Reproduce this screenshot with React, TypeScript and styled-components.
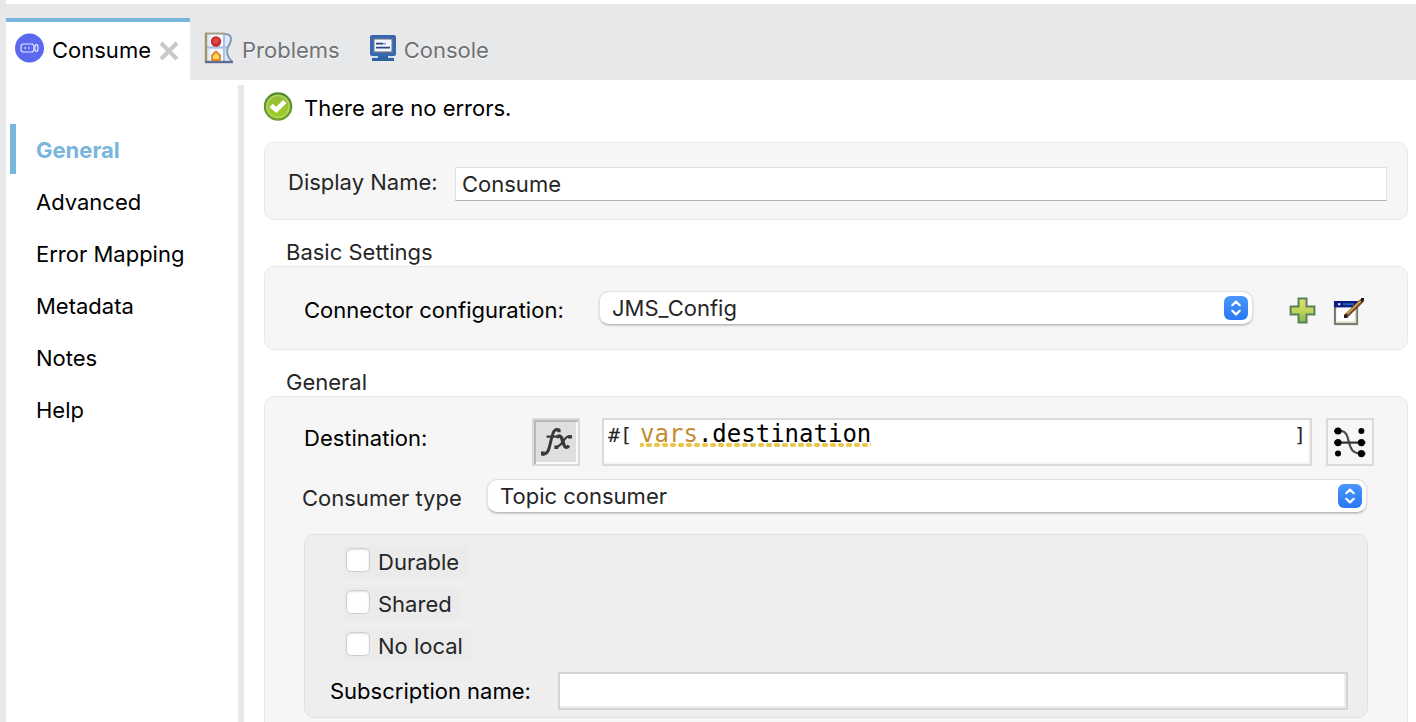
import React from "react";
import styled, { createGlobalStyle } from "styled-components";

const GlobalStyle = createGlobalStyle`
  *, *::before, *::after { box-sizing: border-box; }
  body {
    margin: 0;
    background: #ffffff;
    color: #000000;
    font-family: Inter, "Liberation Sans", sans-serif;
    font-size: 22px;
    line-height: 28px;
  }
  button, input, select { font: inherit; color: inherit; }
`;

const Shell = styled.div`
  height: 100vh;
  display: flex;
  flex-direction: column;
  overflow: hidden;
  border-left: 6px solid #e7e8ea;
`;

const TabBar = styled.div`
  flex: none;
  display: flex;
  align-items: flex-end;
  gap: 14px;
  height: 76px;
  margin-top: 4px;
  background: #e7e8ea;
`;

const TabItem = styled.div<{ $active?: boolean }>`
  display: flex;
  align-items: center;
  height: 62px;
  padding: ${(p) => (p.$active ? "0 10px 2px 9px" : "0 16px 2px 0")};
  border-top: 4px solid ${(p) => (p.$active ? "#78b6dc" : "transparent")};
  background: ${(p) => (p.$active ? "#ffffff" : "transparent")};
  width: ${(p) => (p.$active ? "184px" : "auto")};
`;

const Tab = styled.button<{ $active?: boolean }>`
  display: flex;
  align-items: center;
  gap: 8px;
  flex: 1;
  padding: 0;
  border: 0;
  background: none;
  color: ${(p) => (p.$active ? "#000000" : "#707173")};
  text-shadow: ${(p) => (p.$active ? "none" : "0 1px 0 #ffffff")};
  white-space: nowrap;
  svg { flex: none; margin-bottom: 4px; }
`;

const CloseButton = styled.button`
  display: flex;
  padding: 2px 0 0;
  border: 0;
  background: none;
`;

const Body = styled.div`
  flex: 1;
  min-height: 0;
  display: flex;
  padding-top: 5px;
`;

const Sidebar = styled.nav`
  flex: none;
  width: 238px;
  padding: 39px 0 0 4px;
  border-right: 6px solid #e7e8ea;
`;

const NavList = styled.ul`
  display: flex;
  flex-direction: column;
  gap: 2px;
  margin: 0;
  padding: 0;
  list-style: none;
`;

const NavLink = styled.a<{ $active?: boolean }>`
  display: flex;
  align-items: center;
  height: 50px;
  padding-left: 20px;
  padding-top: 2px;
  border-left: 6px solid ${(p) => (p.$active ? "#78b6dc" : "transparent")};
  color: ${(p) => (p.$active ? "#78b6dc" : "#000000")};
  font-weight: ${(p) => (p.$active ? 700 : 400)};
  text-decoration: none;
`;

const Content = styled.main`
  flex: 1;
  min-width: 0;
  padding: 7px 8px 0 20px;
  color: #262626;
`;

const Status = styled.div`
  display: flex;
  align-items: center;
  gap: 11px;
  height: 30px;
  color: #000000;
  line-height: 30px;
`;

const StatusText = styled.span`
  padding-top: 2px;
`;

const Panel = styled.section`
  border: 1px solid #e9e9e9;
  border-radius: 10px;
  background: #f6f6f6;
`;

const NamePanel = styled(Panel)`
  display: flex;
  align-items: center;
  height: 78px;
  margin-top: 20px;
  padding: 6px 20px 0 23px;
`;

const GroupTitle = styled.h2`
  margin: 0;
  padding: 18px 0 0 22px;
  font-size: 22px;
  font-weight: 400;
  line-height: 28px;
`;

const NameInput = styled.input`
  flex: 1;
  min-width: 0;
  height: 34px;
  padding: 0 6px;
  border: 1px solid #e0e0e0;
  border-bottom-color: #b4b4b4;
  background: #ffffff;
  outline: none;
`;

const Label = styled.label<{ $width: number; $strong?: boolean; $shift?: "up" | "down" }>`
  flex: none;
  width: ${(p) => p.$width}px;
  padding-top: ${(p) => (p.$shift === "down" ? 4 : 0)}px;
  padding-bottom: ${(p) => (p.$shift === "up" ? 4 : 0)}px;
  color: ${(p) => (p.$strong ? "#000000" : "#262626")};
  white-space: nowrap;
`;

const ConfigPanel = styled(Panel)`
  display: flex;
  align-items: center;
  height: 84px;
  padding: 0 42px 0 39px;
`;

const SelectWrap = styled.div`
  position: relative;
  flex: 1;
  min-width: 0;
  height: 34px;
`;

const Select = styled.select`
  display: block;
  width: 100%;
  height: 34px;
  padding: 0 40px 0 12px;
  border: 1px solid #e0e0e0;
  border-bottom-color: #bdbdbd;
  border-radius: 10px;
  background: #ffffff;
  box-shadow: 0 1px 2px rgba(0, 0, 0, 0.18);
  appearance: none;
  outline: none;
`;

const SelectArrows = styled.svg`
  position: absolute;
  top: 5px;
  right: 5px;
  pointer-events: none;
`;

const IconButton = styled.button`
  display: flex;
  flex: none;
  padding: 0;
  border: 0;
  background: none;
`;

const IconGroup = styled.div`
  display: flex;
  gap: 17px;
  margin-left: 36px;
  padding-top: 6px;
`;

const GeneralPanel = styled(Panel)`
  padding: 21px 33px 40px 37px;
`;

const DestinationRow = styled.div`
  display: flex;
  align-items: flex-start;
  padding-left: 2px;
  line-height: 40px;
`;

const SquareButton = styled.button<{ $pressed?: boolean }>`
  display: flex;
  align-items: center;
  justify-content: center;
  flex: none;
  width: 48px;
  height: 48px;
  padding: 0;
  border: 2px solid #dadada;
  background: ${(p) => (p.$pressed ? "#dfdfdf" : "#f6f6f6")};
  box-shadow: ${(p) =>
    p.$pressed ? "inset 2px 2px 0 #b8b8b8, inset -2px -2px 0 #fafafa" : "none"};
`;

const Editor = styled.div`
  display: flex;
  flex: 1;
  min-width: 0;
  height: 48px;
  margin: 0 14px 0 22px;
  padding: 0 4px;
  border: 2px solid #dadada;
  background: #ffffff;
  box-shadow: inset -2px -2px 0 #f6f6f6;
  font-family: "DejaVu Sans Mono", monospace;
  color: #000000;
`;

const Bracket = styled.span`
  flex: none;
  color: #262626;
  font-size: 20px;
  line-height: 30px;
`;

const Expression = styled.div`
  flex: 1;
  min-width: 0;
  padding-left: 8px;
  font-size: 24px;
  line-height: 28px;
  white-space: nowrap;
  outline: none;
`;

const Warning = styled.span`
  display: inline-block;
  background: radial-gradient(ellipse 3px 3px at 4px 2px, #ecc64c 90%, transparent 100%)
    -3px 23px / 8px 4px repeat-x;
`;

const Variable = styled.span`
  color: #c28d32;
`;

const ConsumerRow = styled.div`
  display: flex;
  align-items: center;
  margin: 13px 7px 0 0;
`;

const SubPanel = styled.fieldset`
  display: flex;
  flex-direction: column;
  align-items: flex-start;
  gap: 10px;
  min-width: 0;
  height: 184px;
  margin: 21px 6px 0 2px;
  padding: 11px 19px 0 25px;
  border: 1px solid #e2e2e2;
  border-radius: 10px;
  background: #eeeeee;
`;

const CheckLabel = styled.label`
  display: flex;
  align-items: center;
  gap: 8px;
  height: 32px;
  margin-left: 14px;
  padding: 0 9px 0 2px;
  background: #ebebeb;
`;

const Checkbox = styled.input`
  flex: none;
  width: 24px;
  height: 24px;
  margin: 0 0 4px;
  border: 1px solid #cfcfcf;
  border-radius: 5px;
  background: #ffffff;
  box-shadow: inset 0 1px 2px rgba(0, 0, 0, 0.12);
  appearance: none;
`;

const SubscriptionRow = styled.div`
  display: flex;
  align-items: center;
  align-self: stretch;
  line-height: 30px;
`;

const TextInput = styled.input`
  flex: 1;
  min-width: 0;
  height: 38px;
  padding: 0 6px;
  border: 2px solid #d4d4d4;
  background: #ffffff;
  box-shadow: inset -2px -2px 0 #eeeeee;
  outline: none;
`;

const ConsumeIcon = () => (
  <svg width="29" height="30" viewBox="0 0 29 30" aria-hidden="true">
    <circle cx="14.5" cy="15" r="14.5" fill="#5b69f1" />
    <g fill="none" stroke="#e4e6ff" strokeWidth="1.2">
      <path d="M17.5 11H8.2Q6 11 6 13.2V16.8Q6 19 8.2 19H17.5" />
      <path d="M17 11Q19 11 19 15T17 19" />
      <ellipse cx="21.4" cy="15" rx="1.6" ry="3.4" />
    </g>
    <path d="M9.4 14.2h1.6v1.6H9.4zM13 14.2h1.6v1.6H13z" fill="#e4e6ff" />
  </svg>
);

const CloseIcon = () => (
  <svg width="22" height="22" viewBox="0 0 22 22" aria-hidden="true">
    <path d="M3 3L19 19M19 3L3 19" stroke="#c9c9c9" strokeWidth="4.2" />
  </svg>
);

const ProblemsIcon = () => (
  <svg width="30" height="32" viewBox="0 0 30 32" aria-hidden="true">
    <path d="M1 1H22Q27.5 2 27 8Q26.5 11 24 15Q22 20 24.5 25L29 30H1Z" fill="#dcebfa" />
    <path d="M6 3H19V14H6zM6 17H19V29H6z" fill="#f5f9fd" />
    <path d="M1 15.5H24M20 2V30" stroke="#a9bfe3" strokeWidth="2" />
    <path d="M21 2Q27.5 2 27 8Q26.5 11 24 15Q22 20 24.5 25L28 30" fill="none" stroke="#8798b4" strokeWidth="2" />
    <path d="M1 1.5H21" stroke="#a5a388" strokeWidth="2" />
    <path d="M2 1V30" stroke="#a39662" strokeWidth="2.4" />
    <path d="M1 30H29" stroke="#5e6c92" strokeWidth="2.4" />
    <circle cx="12" cy="9.5" r="5.2" fill="#c92a2b" />
    <circle cx="12" cy="9" r="2.8" fill="#df4a48" />
    <path d="M12 19.5L16 23.5V28H8V23.5Z" fill="#fbd85e" stroke="#df8c28" strokeWidth="2" strokeLinejoin="round" />
  </svg>
);

const ConsoleIcon = () => (
  <svg width="26" height="28" viewBox="0 0 26 28" aria-hidden="true">
    <rect x="0" y="1" width="26" height="21" rx="2" fill="#3767b0" />
    <rect x="3" y="4" width="20" height="15" fill="#5e6f92" />
    <rect x="4.5" y="5.5" width="17" height="12" fill="#f3f7fd" />
    <path d="M6 9.7H13M6 13.7H20" stroke="#2d4580" strokeWidth="1.8" />
    <path d="M13 9.7H16" stroke="#93a5d3" strokeWidth="1.8" />
    <path d="M8 22H18V24H24V27H2V24H8Z" fill="#33609f" />
    <path d="M3 23.2H8M18 23.2H23" stroke="#c7d8f2" strokeWidth="1.4" />
  </svg>
);

const OkIcon = () => (
  <svg width="29" height="30" viewBox="0 0 29 30" aria-hidden="true">
    <defs>
      <linearGradient id="okFill" x1="0" y1="0" x2="0" y2="1">
        <stop offset="0" stopColor="#8fb93c" />
        <stop offset="1" stopColor="#a0d022" />
      </linearGradient>
      <linearGradient id="okRim" x1="0" y1="0" x2="0" y2="1">
        <stop offset="0" stopColor="#4f8a30" />
        <stop offset="1" stopColor="#6f9d2e" />
      </linearGradient>
    </defs>
    <circle cx="14" cy="14.5" r="13.2" fill="url(#okFill)" stroke="url(#okRim)" strokeWidth="2.2" />
    <circle cx="14" cy="14.5" r="11" fill="none" stroke="#b0d262" strokeWidth="1.6" />
    <path d="M7 13.5L12.3 18L20.8 9.6" fill="none" stroke="#ffffff" strokeWidth="4.6" />
  </svg>
);

const AddIcon = () => (
  <svg width="27" height="27" viewBox="0 0 27 27" aria-hidden="true">
    <defs>
      <linearGradient id="addFill" x1="0" y1="0" x2="0" y2="1">
        <stop offset="0" stopColor="#dde06c" />
        <stop offset="0.5" stopColor="#c5d55a" />
        <stop offset="1" stopColor="#7fb948" />
      </linearGradient>
    </defs>
    <path d="M9.5 1.6H17.5V9.5H25.4V17.5H17.5V25.4H9.5V17.5H1.6V9.5H9.5Z" fill="url(#addFill)" stroke="#56825a" strokeWidth="2" />
  </svg>
);

const EditIcon = () => (
  <svg width="32" height="29" viewBox="0 0 32 29" aria-hidden="true">
    <rect x="2" y="6" width="22" height="21" fill="#ffffff" stroke="#7b7b72" strokeWidth="2.2" />
    <path d="M3.5 25H22.5V12" fill="none" stroke="#dedcc0" strokeWidth="1.6" />
    <rect x="1" y="4" width="24" height="6.4" fill="#0c1c86" />
    <path d="M10 7.2H21" stroke="#2f62ae" strokeWidth="2" />
    <path d="M5 7.2h2.4" stroke="#e6f2ff" strokeWidth="2" />
    <path d="M13 19L29 3.5" stroke="#6e4a25" strokeWidth="4.4" />
    <path d="M14 17L27.5 4" stroke="#d59a4c" strokeWidth="1.8" />
    <path d="M28 1h3v3.4h-3zM11 17.6h3.4V21H11z" fill="#241a18" />
  </svg>
);

const FxIcon = () => (
  <svg width="34" height="30" viewBox="0 0 34 30" aria-hidden="true">
    <g fill="none" stroke="#383838">
      <path d="M20.5 3.2Q15 .8 13.4 8L10.4 20Q8.6 28.2 2.6 27" strokeWidth="3" />
      <path d="M7.6 9.6H18.4" strokeWidth="2.2" />
      <path d="M17.8 10.4Q21.4 7.2 22.8 11.4L25 18Q26.6 22.4 30 18.6" strokeWidth="3.4" />
      <path d="M32 9.6Q28.2 8 24.6 13.6T16.4 20.6" strokeWidth="2.2" />
    </g>
    <path d="M18.4 2.2h3.2v3h-3.2zM2 24.6h3.6v3.6H2zM15.4 18.4h3.8v3.6h-3.8zM29 8.2h4v3.4h-4z" fill="#383838" />
  </svg>
);

const MapIcon = () => (
  <svg width="34" height="34" viewBox="0 0 34 34" aria-hidden="true">
    <path d="M5 6H8C14 6.5 14.6 12 16 17.6C17.4 23 19 28 27 28.6" fill="none" stroke="#4a4a4a" strokeWidth="2.2" />
    <path d="M5 17.6H28" stroke="#333333" strokeWidth="2.2" />
    <g fill="#000000">
      <circle cx="5" cy="6" r="3.6" />
      <circle cx="28.4" cy="6" r="3" />
      <circle cx="5" cy="17.6" r="3.6" />
      <circle cx="28.4" cy="17.6" r="3.6" />
      <circle cx="5" cy="28.6" r="3" />
      <circle cx="28.4" cy="28.6" r="3.6" />
    </g>
    <path d="M1 5.2h4v1.6H1zM1 16.8h4v1.6H1zM28.4 16.8h4v1.6h-4zM28.4 27.8h4v1.6h-4z" fill="#000000" />
  </svg>
);

const Arrows = () => (
  <SelectArrows width="24" height="24" viewBox="0 0 24 24" aria-hidden="true">
    <defs>
      <linearGradient id="arrowFill" x1="0" y1="0" x2="0" y2="1">
        <stop offset="0" stopColor="#4a96fa" />
        <stop offset="1" stopColor="#2a78f5" />
      </linearGradient>
    </defs>
    <rect width="24" height="24" rx="6" fill="url(#arrowFill)" />
    <path d="M8.3 9.2L12 5.6L15.7 9.2M8.3 14.8L12 18.4L15.7 14.8" fill="none" stroke="#ffffff" strokeWidth="2.2" strokeLinecap="round" strokeLinejoin="round" />
  </SelectArrows>
);

const navItems = ["General", "Advanced", "Error Mapping", "Metadata", "Notes", "Help"];
const options = ["Durable", "Shared", "No local"];

export default function App() {
  return (
    <>
      <GlobalStyle />
      <Shell>
        <TabBar>
          <TabItem $active>
            <Tab $active type="button">
              <ConsumeIcon />
              Consume
            </Tab>
            <CloseButton type="button" aria-label="Close Consume">
              <CloseIcon />
            </CloseButton>
          </TabItem>
          <TabItem>
            <Tab type="button">
              <ProblemsIcon />
              Problems
            </Tab>
          </TabItem>
          <TabItem>
            <Tab type="button">
              <ConsoleIcon />
              Console
            </Tab>
          </TabItem>
        </TabBar>
        <Body>
          <Sidebar aria-label="Properties">
            <NavList>
              {navItems.map((item, i) => (
                <li key={item}>
                  <NavLink href="#" $active={i === 0} aria-current={i === 0 ? "page" : undefined}>
                    {item}
                  </NavLink>
                </li>
              ))}
            </NavList>
          </Sidebar>
          <Content>
            <Status role="status">
              <OkIcon />
              <StatusText>There are no errors.</StatusText>
            </Status>
            <NamePanel>
              <Label htmlFor="display-name" $width={167} $shift="up">Display Name:</Label>
              <NameInput id="display-name" type="text" defaultValue="Consume" />
            </NamePanel>
            <GroupTitle>Basic Settings</GroupTitle>
            <ConfigPanel>
              <Label htmlFor="config" $width={295} $strong $shift="down">Connector configuration:</Label>
              <SelectWrap>
                <Select id="config" defaultValue="JMS_Config">
                  <option>JMS_Config</option>
                </Select>
                <Arrows />
              </SelectWrap>
              <IconGroup>
                <IconButton type="button" aria-label="Add configuration">
                  <AddIcon />
                </IconButton>
                <IconButton type="button" aria-label="Edit configuration">
                  <EditIcon />
                </IconButton>
              </IconGroup>
            </ConfigPanel>
            <GroupTitle>General</GroupTitle>
            <GeneralPanel>
              <DestinationRow>
                <Label as="span" id="destination-label" $width={228} $strong>Destination:</Label>
                <SquareButton type="button" $pressed aria-pressed="true" aria-label="Expression mode">
                  <FxIcon />
                </SquareButton>
                <Editor>
                  <Bracket>#[</Bracket>
                  <Expression
                    role="textbox"
                    aria-labelledby="destination-label"
                    contentEditable
                    suppressContentEditableWarning
                    spellCheck={false}
                  >
                    <Warning>
                      <Variable>vars</Variable>.destination
                    </Warning>
                  </Expression>
                  <Bracket>]</Bracket>
                </Editor>
                <SquareButton type="button" aria-label="Open mapping">
                  <MapIcon />
                </SquareButton>
              </DestinationRow>
              <ConsumerRow>
                <Label htmlFor="consumer-type" $width={185} $shift="down">Consumer type</Label>
                <SelectWrap>
                  <Select id="consumer-type" defaultValue="Topic consumer">
                    <option>Topic consumer</option>
                  </Select>
                  <Arrows />
                </SelectWrap>
              </ConsumerRow>
              <SubPanel aria-label="Topic consumer">
                {options.map((option) => (
                  <CheckLabel key={option}>
                    <Checkbox type="checkbox" />
                    {option}
                  </CheckLabel>
                ))}
                <SubscriptionRow>
                  <Label htmlFor="subscription" $width={228} $strong>Subscription name:</Label>
                  <TextInput id="subscription" type="text" />
                </SubscriptionRow>
              </SubPanel>
            </GeneralPanel>
          </Content>
        </Body>
      </Shell>
    </>
  );
}
